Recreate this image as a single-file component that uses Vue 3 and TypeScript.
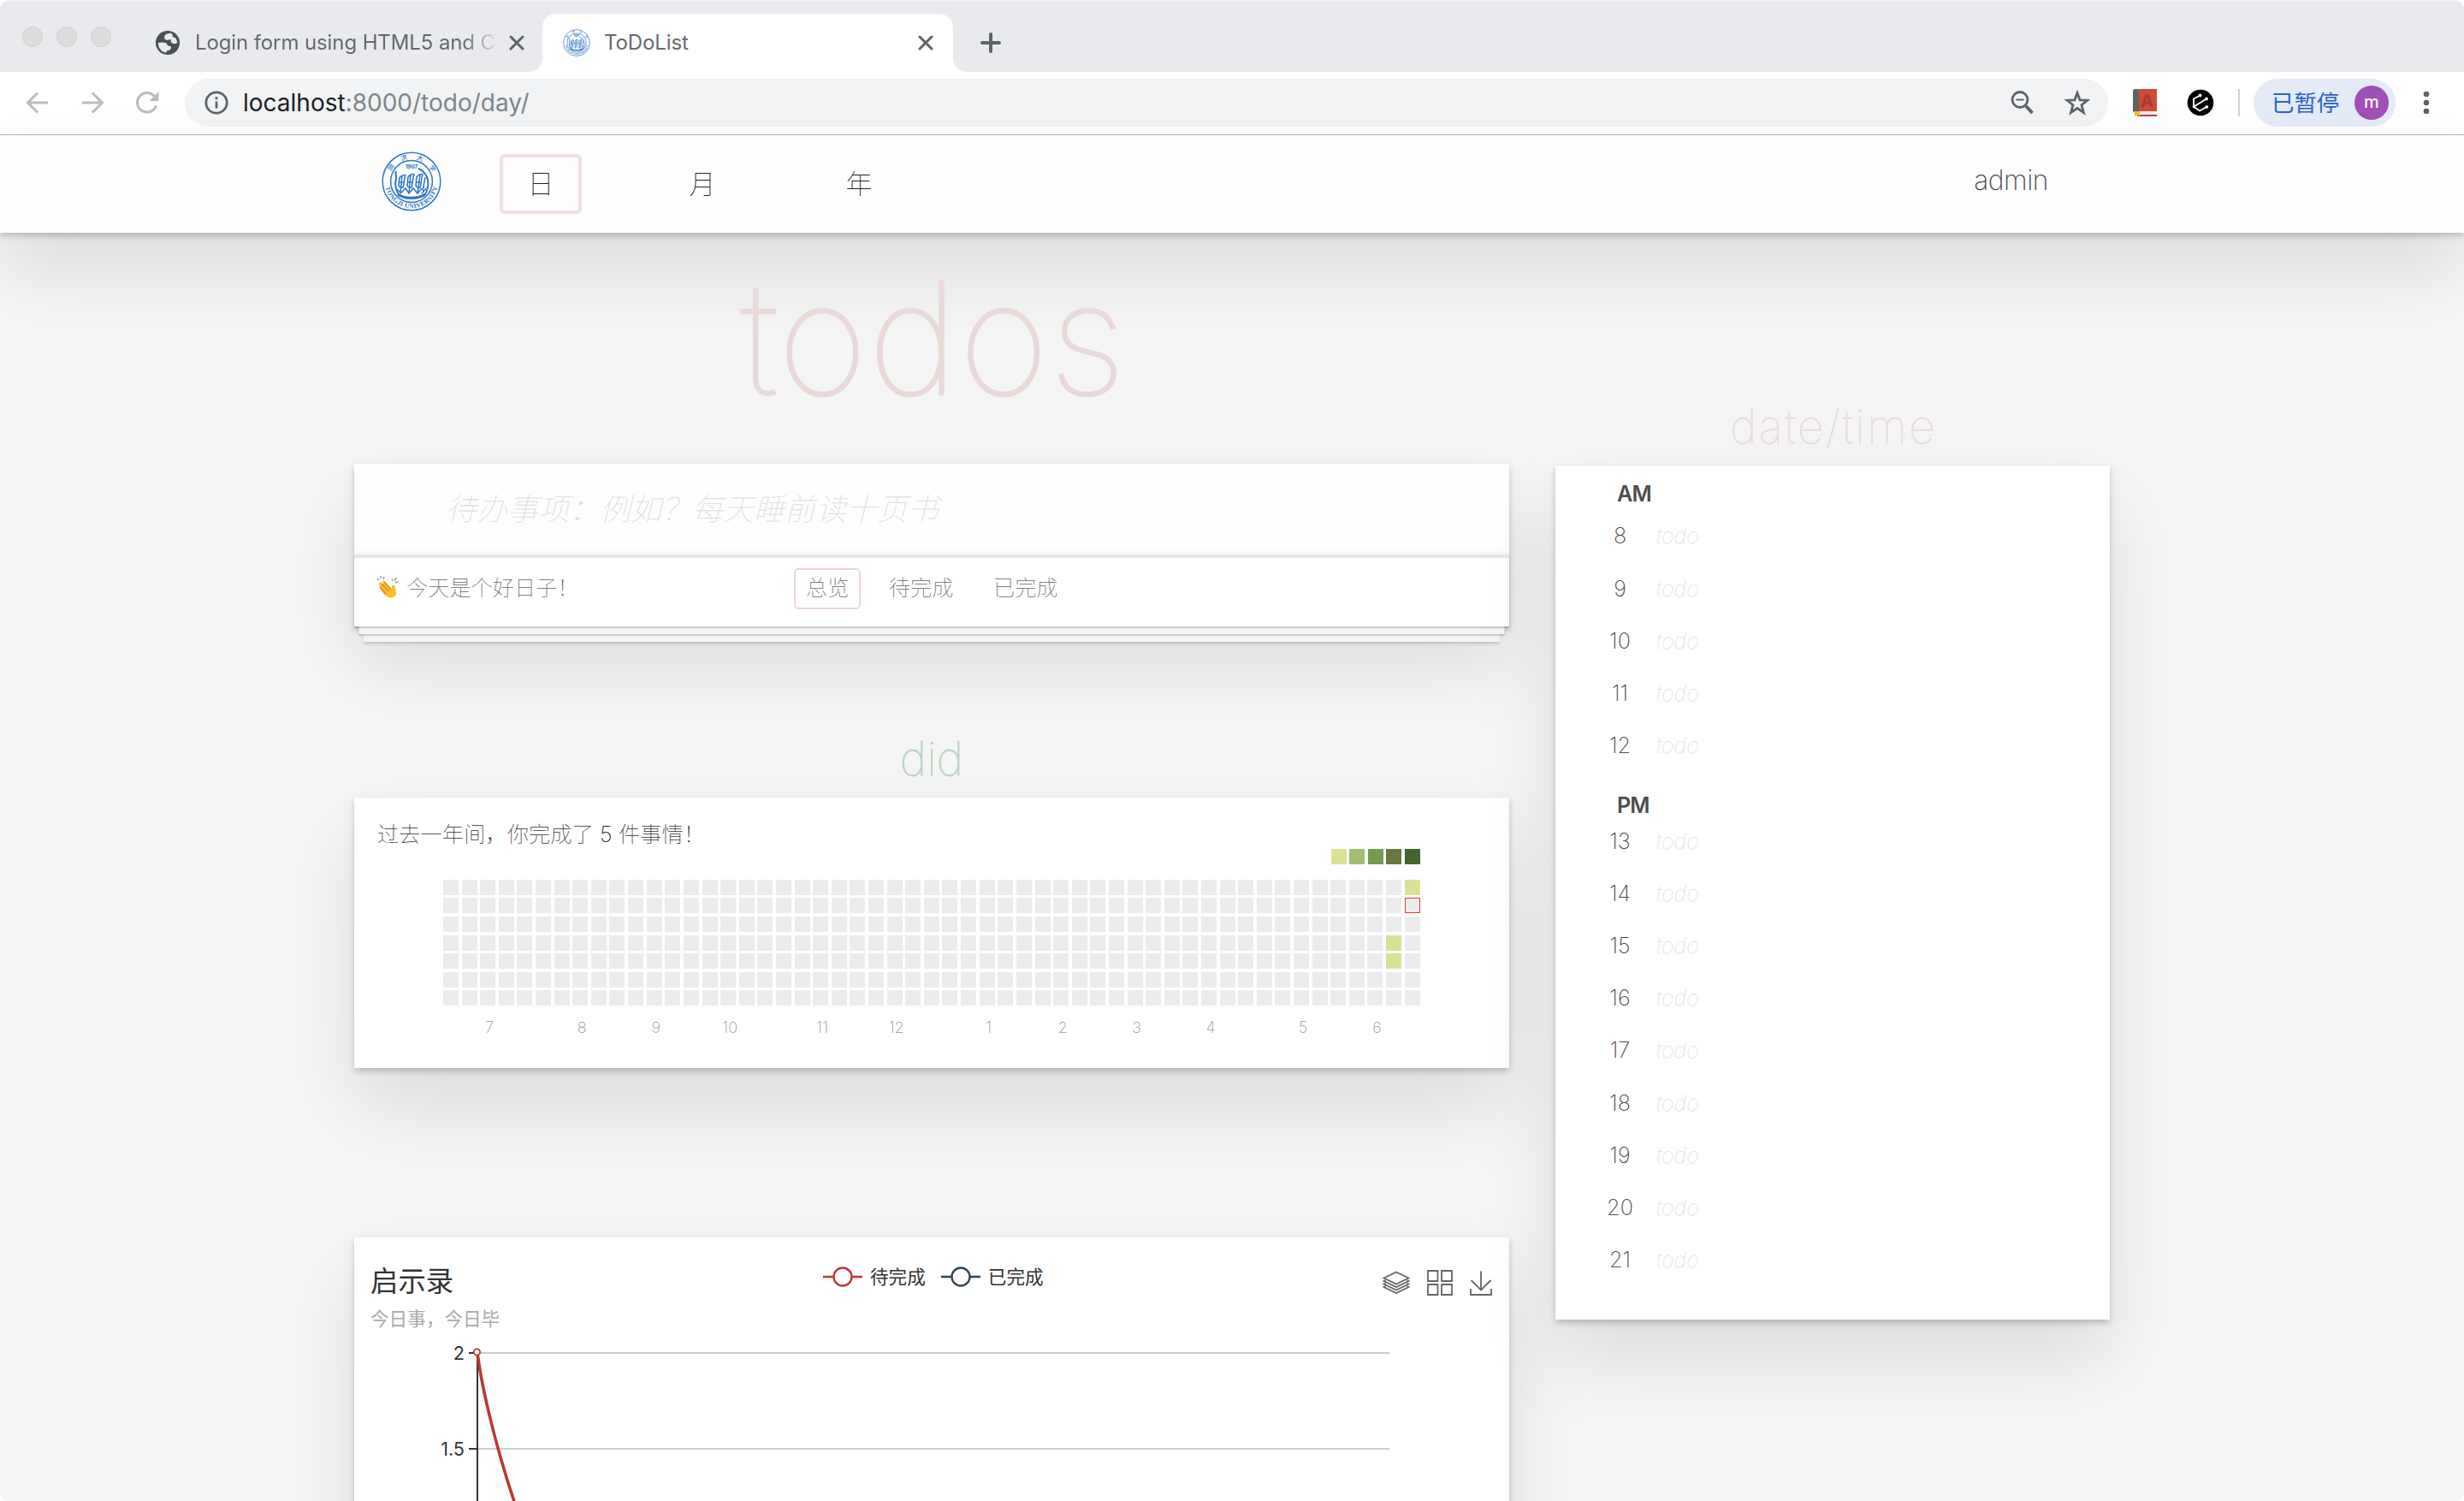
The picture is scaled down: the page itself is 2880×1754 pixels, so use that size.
<script setup lang="ts">
interface Tick {
  label: string
  y: number
}

const months: { label: string; column: number }[] = [
  { label: '7', column: 3 },
  { label: '8', column: 8 },
  { label: '9', column: 12 },
  { label: '10', column: 16 },
  { label: '11', column: 21 },
  { label: '12', column: 25 },
  { label: '1', column: 30 },
  { label: '2', column: 34 },
  { label: '3', column: 38 },
  { label: '4', column: 42 },
  { label: '5', column: 47 },
  { label: '6', column: 51 },
]

const weeks = 53
const done = new Set<number>([52 * 7, 51 * 7 + 3, 51 * 7 + 4])
const today = 52 * 7 + 1
const days = Array.from({ length: weeks * 7 }, (_, i) => ({
  done: done.has(i),
  today: i === today,
}))

const am: number[] = [8, 9, 10, 11, 12]
const pm: number[] = [13, 14, 15, 16, 17, 18, 19, 20, 21]

const ticks: Tick[] = [
  { label: '2', y: 23 },
  { label: '1.5', y: 135 },
]
</script>

<template>
  <div class="window">
    <svg class="defs" width="0" height="0">
      <defs>
        <symbol id="seal" viewBox="0 0 70 70">
          <g fill="none" stroke="#2f78c4">
            <circle cx="35" cy="35" r="33.8" stroke-width="1.5" />
            <circle cx="35" cy="35" r="24.4" stroke-width="1.5" />
            <path id="sealBottom" d="M3.8 35a31.2 31.2 0 0 0 62.4 0" stroke="none" />
            <path id="sealTop" d="M8.8 35a26.2 26.2 0 0 1 52.4 0" stroke="none" />
            <path d="M17 23c-2 3 1 5 0 9-2 6 0 14 3 18 4 5 26 5 31 0 3-5 4-11 3-17-1-5-5-11-11-13" stroke-width="2" />
            <path d="M19 50c8 6 24 6 32 0" stroke-width="3" />
            <path d="M21 31c2-3 5-4 7-3-2 4-1 8-3 14-3 1-5-1-5-3 1-3 0-5 1-8zM31 30c2-3 5-4 7-3-2 4-1 9-3 15-3 1-5-1-5-3 1-3 0-5 1-9zM41 30c2-3 5-4 7-3-2 4-1 9-3 15-3 1-5-1-5-3 1-3 0-5 1-9z" stroke-width="1.6" />
            <path d="M20 36h6M30 36h6M40 36h6M24 28l-2 20M34 27l-2 22M45 27l-3 22M51 30l-3 16M22 49l6-6 4 6 5-6 5 6 5-6M18 44l5 5M52 43l-5 6" stroke-width="1.5" />
          </g>
          <g fill="#2f78c4">
            <text class="seal-latin" font-size="7.6"><textPath href="#sealBottom" startOffset="7" textLength="84">TONGJI UNIVERSITY</textPath></text>
            <text class="seal-han" font-size="7.4"><textPath href="#sealTop" startOffset="12" textLength="59">同济大学</textPath></text>
            <text class="seal-year" x="35" y="19.5" font-size="6" text-anchor="middle">1907</text>
          </g>
        </symbol>
      </defs>
    </svg>

    <div class="tabs">
      <div class="lights"><i></i><i></i><i></i></div>
      <div class="tab idle">
        <svg class="globe" viewBox="0 0 28 28" width="28" height="28">
          <circle cx="14" cy="14" r="14" fill="#4c4f54" />
          <path d="M12 4l5-1.500 2.500 1.500.5 3 3.500 1.500 1.800 4.500-1.300 2h-3.500l-2.500-1.500-.5-3.500-4.500 1-2.500-1.500-.5-3z" fill="#e8eaed" />
          <path d="M2.700 14l4.800-.5 5 .8 1.500 3 3.500.7.5 2-1.500 2.500-3 .5-1.500 2.800-4.500-1.800L3.800 19.500z" fill="#e8eaed" />
        </svg>
        <span class="tab-title faded">Login form using HTML5 and C</span>
        <svg class="close" viewBox="0 0 18 18" width="18" height="18"><path d="M2 2l14 14M16 2L2 16" /></svg>
      </div>
      <div class="tab active">
        <svg class="favicon" width="32" height="32"><use href="#seal" width="32" height="32" /></svg>
        <span class="tab-title">ToDoList</span>
        <svg class="close" viewBox="0 0 18 18" width="18" height="18"><path d="M2 2l14 14M16 2L2 16" /></svg>
      </div>
      <svg class="plus" viewBox="0 0 24 24" width="24" height="24"><path d="M12 2v20M2 12h20" /></svg>
    </div>

    <div class="toolbar">
      <svg class="nav-icon" viewBox="0 0 28 28" width="28" height="28"><path d="M14 2.500L2.500 14 14 25.500M3 14h23" /></svg>
      <svg class="nav-icon" viewBox="0 0 28 28" width="28" height="28"><path d="M14 2.500L25.500 14 14 25.500M25 14H2" /></svg>
      <svg class="nav-icon" viewBox="0 0 28 28" width="28" height="28">
        <path d="M24.500 17.500A11.300 11.300 0 1 1 22.500 6.500" /><path class="solid" d="M27.500 1v11H16.500z" />
      </svg>
      <div class="address">
        <svg class="info" viewBox="0 0 28 28" width="28" height="28">
          <circle cx="14" cy="14" r="12.200" /><path d="M14 12.500v8M14 7.300v3" />
        </svg>
        <span class="url"><b>localhost</b>:8000/todo/day/</span>
        <svg class="lens" viewBox="0 0 28 28" width="28" height="28">
          <circle cx="11" cy="10.500" r="9" /><path d="M6.500 10.500h9" stroke-width="2" /><path d="M17.500 17.500l8 8.500" stroke-width="4" />
        </svg>
        <svg class="star" viewBox="0 0 30 30" width="30" height="30">
          <path d="M15 3.500l3 8.300 9 .4-7 5.500 2.400 8.700L15 21.500l-7.400 4.900L10 17.700l-7-5.500 9-.4z" />
        </svg>
      </div>
      <svg class="book" viewBox="0 0 28 32" width="28" height="32">
        <path d="M7 26h21v4H4z" fill="#eee" /><path d="M5 30h23v2H5z" fill="#c9402f" />
        <path d="M0 3a3 3 0 0 1 3-3h4v26H3a3 3 0 0 0-3 3z" fill="#5f6464" /><path d="M7 0h21v26H7z" fill="#cf4b37" />
        <text x="16.500" y="21" text-anchor="middle" font-size="20" font-weight="700" fill="#a83a2e">A</text>
        <path d="M2 26h6v6l-3-2-3 2z" fill="#f2b92c" />
      </svg>
      <svg class="circuit" viewBox="0 0 32 32" width="32" height="32">
        <circle cx="16" cy="16" r="15.300" fill="#000" />
        <g fill="none" stroke="#fff" stroke-width="1.800"><path d="M15.500 7.500L8 11.500v8M10 19.500l13-8M8.500 21l6.500 4.500 8-4.500" /></g>
        <g fill="#fff"><circle cx="15.500" cy="7.500" r="1.900" /><circle cx="23" cy="11.500" r="1.900" /><circle cx="8.500" cy="20.500" r="1.900" /><circle cx="23.300" cy="20.800" r="1.900" /></g>
      </svg>
      <span class="divider"></span>
      <div class="profile"><span>已暂停</span><em>m</em></div>
      <svg class="menu" viewBox="0 0 8 28" width="8" height="28"><circle cx="4" cy="4" r="3.300" /><circle cx="4" cy="14" r="3.300" /><circle cx="4" cy="24" r="3.300" /></svg>
    </div>

    <div class="page">
      <header class="topbar">
        <svg class="logo" width="70" height="70"><use href="#seal" width="70" height="70" /></svg>
        <a class="range day selected">日</a>
        <a class="range month">月</a>
        <a class="range">年</a>
        <span class="user">admin</span>
      </header>

      <main class="columns">
        <section class="left">
          <h1>todos</h1>
          <div class="card todo-card">
            <div class="new-todo">待办事项：例如？每天睡前读十页书</div>
            <footer class="filters">
              <svg class="clap" viewBox="0 0 26 26" width="26" height="26">
                <path d="M3 9c0-2 2-2 3-1l2 2-1-3c0-2 2-2 3-.5l8 8.500 0-3c.5-2 3-1.500 3.500.5.8 3.500 2 7 1.500 9-1 3-5 5-8.500 3.500C9 23 4 17 3 9z" fill="#fbbf2d" />
                <path d="M4 13l7 8M6 9l8 9M9 7l8 9" stroke="#d98a1c" stroke-width="1.200" fill="none" />
                <path d="M1 3l2 2M5 0v3M9 1L8 4M18 3l1 3M23 2l-2 4M25 7l-3 1" stroke="#9a9a9a" stroke-width="1.400" fill="none" />
              </svg>
              <span class="mood">今天是个好日子！</span>
              <a class="filter selected">总览</a>
              <a class="filter">待完成</a>
              <a class="filter">已完成</a>
            </footer>
          </div>

          <h2 class="did">did</h2>
          <div class="card did-card">
            <p class="summary">过去一年间，你完成了 <span class="count">5</span> 件事情！</p>
            <div class="heat">
              <div class="legend"><i class="l1"></i><i class="l2"></i><i class="l3"></i><i class="l4"></i><i class="l5"></i></div>
              <div class="days">
                <i v-for="(day, i) in days" :key="i" :class="{ done: day.done, today: day.today }"></i>
              </div>
              <div class="months">
                <span v-for="m in months" :key="m.label" :style="{ gridColumn: m.column }">{{ m.label }}</span>
              </div>
            </div>
          </div>

          <div class="card chart-card">
            <div class="chart-head">
              <div class="chart-title">
                <strong>启示录</strong>
                <small>今日事，今日毕</small>
              </div>
              <div class="series">
                <svg width="46" height="24" viewBox="0 0 46 24" stroke="#c23531"><path d="M0 12h46" /><circle cx="23" cy="12" r="10.500" /></svg>
                <span>待完成</span>
                <svg width="46" height="24" viewBox="0 0 46 24" stroke="#2f4554"><path d="M0 12h46" /><circle cx="23" cy="12" r="10.500" /></svg>
                <span>已完成</span>
              </div>
              <div class="tools">
                <svg width="32" height="30" viewBox="0 0 32 30">
                  <path d="M16 2.500L30.500 9.500 16 16.500 1.500 9.500z" />
                  <path d="M3.500 12l-2 1L16 20l14.500-7-2-1M3.500 15.500l-2 1L16 23.500l14.500-7-2-1M3.500 19l-2 1L16 27l14.500-7-2-1" />
                </svg>
                <svg width="30" height="30" viewBox="0 0 30 30"><path d="M1 1h11.500v12H1zM17 1h12v12H17zM1 17h11.500v12H1zM17 17h12v12H17z" /></svg>
                <svg width="26" height="30" viewBox="0 0 26 30"><path d="M13 1.500V23M1.500 12L13 23.500 24.500 12M1 22v7h24v-7" /></svg>
              </div>
            </div>
            <svg class="plot" width="1350" height="196" viewBox="0 0 1350 196">
              <g v-for="t in ticks" :key="t.label">
                <path :d="`M144 ${t.y}H1210`" stroke="#ccc" stroke-width="2" />
                <path :d="`M134 ${t.y}H144`" stroke="#333" stroke-width="2" />
                <text x="129" :y="t.y + 7.500" text-anchor="end">{{ t.label }}</text>
              </g>
              <path d="M144 23V196" stroke="#333" stroke-width="2" />
              <path d="M144 23C149 62 164 128 187.500 198" stroke="#b93a33" stroke-width="3.600" fill="none" />
              <circle cx="143.500" cy="22" r="3.600" stroke="#c23531" stroke-width="1.800" fill="#fff" />
            </svg>
          </div>
        </section>

        <aside class="right">
          <h2 class="when">date/time</h2>
          <div class="card slots">
            <h3>AM</h3>
            <div v-for="h in am" :key="h" class="slot"><span>{{ h }}</span><em>todo</em></div>
            <h3 class="pm">PM</h3>
            <div v-for="h in pm" :key="h" class="slot"><span>{{ h }}</span><em>todo</em></div>
          </div>
        </aside>
      </main>
    </div>
  </div>
</template>

<style>
body {
  margin: 0;
  background: #fff;
}
</style>

<style scoped>
.window {
  width: 2880px;
  height: 1754px;
  overflow: hidden;
  border-radius: 12px 12px 10px 10px;
  background: #f5f5f5;
  font-family: Inter, "Noto Sans CJK SC", sans-serif;
  display: flex;
  flex-direction: column;
  position: relative;
}
.defs {
  position: absolute;
}
.seal-latin {
  font-family: "Liberation Serif", serif;
  font-weight: 700;
}
.seal-han {
  font-family: "Noto Sans CJK SC", sans-serif;
  font-weight: 500;
}
.seal-year {
  font-weight: 800;
}

/* browser chrome */
.tabs {
  flex: none;
  height: 84px;
  box-sizing: border-box;
  background: #e8eaed;
  border-top: 2px solid #f1f2f4;
  display: flex;
}
.lights {
  display: flex;
  gap: 16px;
  padding: 29px 0 0 26px;
  width: 156px;
  box-sizing: border-box;
}
.lights i {
  width: 24px;
  height: 24px;
  box-sizing: border-box;
  border-radius: 50%;
  background: #dcdcdc;
  border: 1px solid #cfcfcf;
}
.tab {
  display: flex;
  align-items: center;
  height: 68px;
  margin-top: 14px;
  box-sizing: border-box;
}
.idle {
  width: 478px;
  padding-left: 26px;
}
.tab-title {
  font-size: 24px;
  line-height: 32px;
  color: #66696d;
  white-space: nowrap;
}
.faded {
  flex: none;
  width: 360px;
  margin: 0 7px 0 18px;
  letter-spacing: -0.11px;
  -webkit-mask-image: linear-gradient(90deg, #000 312px, transparent 356px);
  mask-image: linear-gradient(90deg, #000 312px, transparent 356px);
}
.close {
  flex: none;
  stroke: #5f6368;
  stroke-width: 3;
  stroke-linecap: round;
}
.active {
  position: relative;
  width: 480px;
  background: #fff;
  border-radius: 16px 16px 0 0;
  padding: 0 23px 0 24px;
}
.active::before,
.active::after {
  content: "";
  position: absolute;
  bottom: 0;
  width: 16px;
  height: 16px;
}
.active::before {
  left: -16px;
  background: radial-gradient(circle at 0 0, transparent 15.5px, #fff 16.500px);
}
.active::after {
  right: -16px;
  background: radial-gradient(circle at 100% 0, transparent 15.5px, #fff 16.500px);
}
.active .tab-title {
  margin: 0 auto 0 16px;
  letter-spacing: -0.1px;
}
.plus {
  margin: 36px 0 0 32px;
  stroke: #5f6368;
  stroke-width: 4;
  stroke-linecap: round;
}
.toolbar {
  flex: none;
  height: 74px;
  box-sizing: border-box;
  border-bottom: 1px solid #b3b4b6;
  background: #fff;
  display: flex;
  align-items: center;
  padding: 0 0 1px 30px;
}
.nav-icon {
  flex: none;
  margin-right: 36px;
  fill: none;
  stroke: #b9bbbe;
  stroke-width: 3;
}
.nav-icon .solid {
  fill: #b9bbbe;
  stroke: none;
}
.address {
  flex: none;
  width: 2248px;
  height: 56px;
  box-sizing: border-box;
  margin-left: -6px;
  border-radius: 28px;
  background: #f1f3f4;
  display: flex;
  align-items: center;
  padding: 0 20px 0 22.5px;
}
.info,
.lens,
.star {
  fill: none;
  stroke: #5f6368;
  stroke-width: 2.8;
}
.url {
  margin: 0 auto 0 17.5px;
  font-size: 28px;
  line-height: 36px;
  color: #80868b;
}
.url b {
  font-weight: 400;
  color: #202124;
}
.star {
  margin: 0 1px 0 35px;
}
.book {
  margin-left: 29px;
}
.circuit {
  margin-left: 35px;
}
.divider {
  width: 2px;
  height: 32px;
  margin: 0 16px 0 28px;
  background: #cfcfcf;
}
.profile {
  width: 166px;
  height: 56px;
  box-sizing: border-box;
  border-radius: 28px;
  background: #e4ebf7;
  display: flex;
  align-items: center;
  justify-content: space-between;
  padding: 0 8px 0 21px;
  font-size: 26.4px;
  line-height: 40px;
  color: #2a62c8;
}
.profile em {
  width: 40px;
  height: 40px;
  border-radius: 50%;
  background: #9f4fb5;
  color: #fff;
  font-style: normal;
  font-size: 20px;
  line-height: 38px;
  font-weight: 500;
  text-align: center;
}
.menu {
  margin-left: 32px;
  fill: #5f6368;
}

/* page */
.page {
  flex: none;
  color: #4d4d4d;
  font-weight: 200;
}
.topbar {
  height: 114px;
  box-sizing: border-box;
  background: #fefefe;
  box-shadow: 0 3.6px 7.2px rgba(0, 0, 0, 0.2), 0 45px 90px rgba(0, 0, 0, 0.1);
  display: flex;
  align-items: center;
  padding: 0 486px 0 446px;
}
.range {
  width: 96px;
  height: 70px;
  box-sizing: border-box;
  border: 4px solid transparent;
  border-radius: 6px;
  font-size: 31px;
  line-height: 61px;
  font-weight: 100;
  color: #222;
  text-align: center;
}
.day {
  margin-right: 93px;
}
.month {
  margin-right: 87px;
}
.logo {
  margin: -6px 68px 0 0;
}
.range.selected {
  border-color: #f0dfdf;
}
.user {
  margin: -8px 0 0 auto;
  font-size: 31.8px;
  line-height: 40px;
  font-weight: 200;
  letter-spacing: -0.5px;
}
.columns {
  display: flex;
  gap: 54px;
  padding-left: 414px;
}
.left {
  width: 1350px;
}
.right {
  width: 648px;
}
h1,
h2,
h3,
p {
  margin: 0;
}
h1 {
  height: 247px;
  margin-bottom: 23px;
  padding-left: 4px;
  line-height: 247px;
  font-size: 181px;
  font-weight: 100;
  letter-spacing: 0.8px;
  text-align: center;
  color: #e9d9d9;
  -webkit-text-stroke: 2.4px #e9d9d9;
}
h2 {
  height: 69px;
  margin-bottom: 11px;
  line-height: 69px;
  font-size: 54px;
  font-weight: 100;
  text-align: center;
}
.did {
  margin-top: 120px;
  color: #bcd5c2;
  -webkit-text-stroke: 0.9px #bcd5c2;
}
.when {
  margin-top: 192px;
  padding-left: 2px;
  letter-spacing: 2.1px;
  color: #ecdcdc;
  -webkit-text-stroke: 0.8px #ecdcdc;
}
.card {
  background: #fff;
  box-shadow: 0 3.6px 7.2px rgba(0, 0, 0, 0.2), 0 45px 90px rgba(0, 0, 0, 0.1);
}
.new-todo {
  height: 106px;
  box-sizing: border-box;
  padding-left: 107px;
  background: #fefefe;
  box-shadow: inset 0 -3.6px 1.8px rgba(0, 0, 0, 0.03);
  font-size: 36px;
  line-height: 107px;
  font-weight: 100;
  font-style: italic;
  color: #e0e0e0;
}
.filters {
  height: 84px;
  box-sizing: border-box;
  border-top: 4px solid #e6e6e6;
  padding: 12px 0 0 26px;
  display: flex;
  font-size: 25.2px;
  line-height: 46px;
  font-weight: 100;
  color: #666;
  box-shadow: 0 1.8px 1.8px rgba(0, 0, 0, 0.2), 0 14.4px 0 -5.4px #f6f6f6, 0 16.2px 1.8px -5.4px rgba(0, 0, 0, 0.2),
    0 28.8px 0 -10.8px #f6f6f6, 0 30.6px 3.6px -10.8px rgba(0, 0, 0, 0.2);
}
.clap {
  margin-top: 9px;
}
.mood {
  width: 453px;
  margin-left: 9px;
}
.filter {
  height: 48px;
  box-sizing: border-box;
  border: 2px solid transparent;
  border-radius: 5px;
  padding: 0 12px;
  margin-right: 18.5px;
  line-height: 43px;
  white-space: nowrap;
}
.filter.selected {
  border-color: #efd5d5;
}
.did-card {
  height: 316px;
  box-sizing: border-box;
  padding: 26px 0 0 27px;
}
.summary {
  height: 34px;
  font-size: 25.2px;
  line-height: 34px;
  font-weight: 100;
  letter-spacing: 0.1px;
  color: #333;
}
.count {
  font-weight: 200;
}
.heat {
  width: 1142px;
  margin-left: 77px;
}
.legend {
  display: flex;
  justify-content: flex-end;
  gap: 3.6px;
}
.legend i {
  width: 18px;
  height: 18px;
}
.l1 { background: #d9e294; }
.l2 { background: #a2be73; }
.l3 { background: #739c51; }
.l4 { background: #69783f; }
.l5 { background: #44632f; }
.days {
  display: grid;
  grid-template-rows: repeat(7, 18px);
  grid-auto-columns: 18px;
  grid-auto-flow: column;
  gap: 3.6px 3.615px;
  margin-top: 17.8px;
}
.days i {
  box-sizing: border-box;
  background: #ececec;
}
.days .done {
  background: #d9e294;
}
.days .today {
  border: 1px solid #e23b30;
}
.months {
  display: grid;
  grid-template-columns: repeat(53, 18px);
  column-gap: 3.615px;
  margin-top: 14px;
  padding-left: 2px;
  font-size: 18px;
  line-height: 24px;
  color: #999;
}
.months span {
  display: flex;
  justify-content: center;
}
.chart-card {
  height: 420px;
  margin-top: 198px;
  font-weight: 400;
  color: #333;
}
.chart-head {
  height: 112px;
  box-sizing: border-box;
  display: flex;
  padding: 31px 20px 0 19px;
}
.chart-title {
  width: 529px;
  display: flex;
  flex-direction: column;
}
.chart-title strong {
  margin-top: 1px;
  font-size: 32.4px;
  line-height: 40px;
  font-weight: 400;
}
.chart-title small {
  margin-top: 8px;
  font-size: 21.6px;
  line-height: 30px;
  color: #aaa;
}
.series {
  display: flex;
  align-items: center;
  height: 30px;
  font-size: 21.6px;
  line-height: 30px;
}
.series svg {
  fill: #fff;
  stroke-width: 2.4;
}
.series span {
  margin: 0 18px 0 9px;
}
.tools {
  display: flex;
  gap: 20px;
  margin: 7px 0 0 auto;
}
.tools svg {
  fill: none;
  stroke: #666;
  stroke-width: 1.8;
}
.plot {
  display: block;
}
.plot text {
  font-size: 21.6px;
  fill: #333;
}
.slots {
  height: 998px;
  box-sizing: border-box;
  padding-top: 14px;
}
h3 {
  padding-left: 72px;
  font-size: 25.2px;
  line-height: 38.4px;
  font-weight: 600;
  letter-spacing: -0.9px;
}
.pm {
  margin-top: 26.4px;
  line-height: 24px;
}
.slot {
  display: flex;
  height: 61.2px;
  line-height: 61.2px;
  font-size: 25.2px;
}
.slot span {
  width: 60px;
  margin-left: 45.5px;
  text-align: center;
}
.slot em {
  margin-left: 12.5px;
  font-weight: 100;
  color: #d6d6d6;
}
</style>
